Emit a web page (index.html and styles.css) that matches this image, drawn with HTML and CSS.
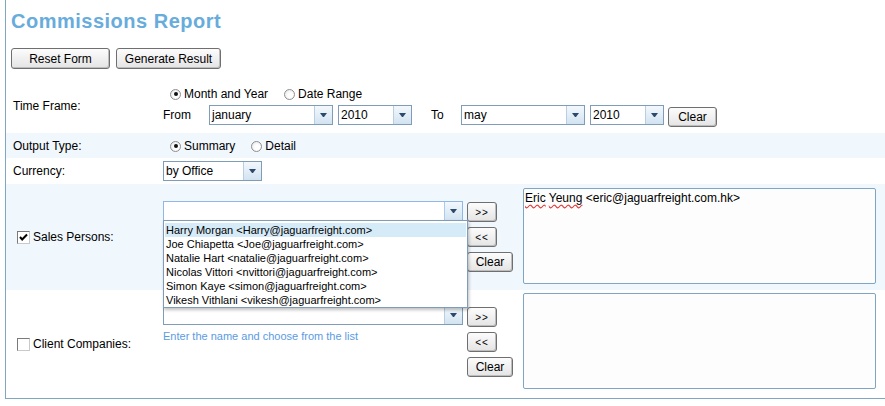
FILE: index.html
```html
<!DOCTYPE html>
<html>
<head>
<meta charset="utf-8">
<title>Commissions Report</title>
<link rel="stylesheet" href="styles.css">
</head>
<body>
<div class="page">
  <h1 class="title">Commissions Report</h1>
  <div class="actions">
    <button class="btn btn-reset">Reset Form</button>
    <button class="btn btn-generate">Generate Result</button>
  </div>

  <div class="form">
    <div class="row row-time">
      <div class="label">Time Frame:</div>
      <div class="ctl ctl-time">
        <div class="radios">
          <span class="radio-opt"><span class="radio on"></span>Month and Year</span>
          <span class="radio-opt"><span class="radio"></span>Date Range</span>
        </div>
        <div class="range">
          <span class="word word-from">From</span>
          <div class="select w-month"><span class="val">january</span><span class="arrow"></span></div>
          <div class="select w-year"><span class="val">2010</span><span class="arrow"></span></div>
          <span class="word word-to">To</span>
          <div class="select w-month"><span class="val">may</span><span class="arrow"></span></div>
          <div class="select w-year"><span class="val">2010</span><span class="arrow"></span></div>
          <button class="btn btn-clear-range">Clear</button>
        </div>
      </div>
    </div>

    <div class="row row-output alt">
      <div class="label">Output Type:</div>
      <div class="ctl">
        <div class="radios">
          <span class="radio-opt"><span class="radio on"></span>Summary</span>
          <span class="radio-opt"><span class="radio"></span>Detail</span>
        </div>
      </div>
    </div>

    <div class="row row-currency">
      <div class="label">Currency:</div>
      <div class="ctl">
        <div class="select w-cur"><span class="val">by Office</span><span class="arrow"></span></div>
      </div>
    </div>

    <div class="row row-sales alt">
      <div class="label"><span class="check on"><svg viewBox="0 0 11 11" width="11" height="11"><path d="M2 5 L4.2 7.5 L9 2.5" fill="none" stroke="#000" stroke-width="2"/></svg></span>Sales Persons:</div>
      <div class="ctl ctl-pick">
        <div class="combo-col">
          <div class="select w-combo focus">
            <span class="val"></span><span class="arrow"></span>
            <div class="dropdown">
              <div class="item hl">Harry Morgan &lt;Harry@jaguarfreight.com&gt;</div>
              <div class="item">Joe Chiapetta &lt;Joe@jaguarfreight.com&gt;</div>
              <div class="item">Natalie Hart &lt;natalie@jaguarfreight.com&gt;</div>
              <div class="item">Nicolas Vittori &lt;nvittori@jaguarfreight.com&gt;</div>
              <div class="item">Simon Kaye &lt;simon@jaguarfreight.com&gt;</div>
              <div class="item">Vikesh Vithlani &lt;vikesh@jaguarfreight.com&gt;</div>
            </div>
          </div>
        </div>
        <div class="btn-col">
          <button class="btn btn-small">&gt;&gt;</button>
          <button class="btn btn-small">&lt;&lt;</button>
          <button class="btn btn-clear">Clear</button>
        </div>
        <div class="box"><span class="spell">Eric</span> <span class="spell">Yeung</span> &lt;eric@jaguarfreight.com.hk&gt;</div>
      </div>
    </div>

    <div class="row row-client">
      <div class="label"><span class="check"></span>Client Companies:</div>
      <div class="ctl ctl-pick">
        <div class="combo-col">
          <div class="select w-combo"><span class="val"></span><span class="arrow"></span></div>
          <div class="hint">Enter the name and choose from the list</div>
        </div>
        <div class="btn-col">
          <button class="btn btn-small">&gt;&gt;</button>
          <button class="btn btn-small">&lt;&lt;</button>
          <button class="btn btn-clear">Clear</button>
        </div>
        <div class="box"></div>
      </div>
    </div>
  </div>
</div>
</body>
</html>
```

FILE: styles.css
```css
body {
  margin: 0;
  background: #fff;
  color: #000;
  font-family: "Liberation Sans", Arial, sans-serif;
  font-size: 12px;
}

.page {
  margin-left: 5px;
  width: 879px;
  height: 398px;
  border-left: 1px solid #7fa6c3;
  border-bottom: 1px solid #7fa6c3;
}

.title {
  margin: 0;
  padding: 9px 0 0 5px;
  font-size: 20px;
  line-height: 24px;
  font-weight: bold;
  letter-spacing: 0.5px;
  color: #68acdc;
}

.actions {
  display: flex;
  gap: 6px;
  padding-left: 5px;
  margin-top: 15px;
}

.btn {
  box-sizing: border-box;
  height: 21px;
  padding: 0;
  font-family: "Liberation Sans", Arial, sans-serif;
  font-size: 12px;
  color: #000;
  background: linear-gradient(#fcfcfc, #e4e4e4);
  border: 1px solid #6f6f6f;
  border-radius: 3px;
  box-shadow: inset -1px -1px 0 #bdbdbd;
}

.btn-reset { width: 99px; }
.btn-generate { width: 105px; }

.form {
  margin-top: 15px;
}

.row {
  display: flex;
  align-items: stretch;
}

.row.alt {
  background: #f0f7fd;
}

.label {
  width: 157px;
  flex: none;
  box-sizing: border-box;
  padding-left: 7px;
  display: flex;
  align-items: center;
}

.ctl {
  display: flex;
  align-items: center;
}

/* time frame */
.row-time {
  padding: 2px 0 7px;
}

.ctl-time {
  flex-direction: column;
  align-items: flex-start;
}

.radios {
  display: flex;
  align-items: center;
  height: 16px;
  padding-left: 7px;
}

.row-output .radios { margin-top: 1px; }

.radio-opt {
  display: flex;
  align-items: center;
  margin-right: 16px;
}

.radio {
  box-sizing: border-box;
  width: 11px;
  height: 11px;
  border-radius: 50%;
  border: 1px solid #8e8e8e;
  background: radial-gradient(circle at 60% 60%, #ffffff 30%, #e2e2e2 100%);
  margin-right: 3px;
  display: flex;
  align-items: center;
  justify-content: center;
}

.radio.on::after {
  content: "";
  width: 4px;
  height: 4px;
  border-radius: 50%;
  background: #111;
}

.range {
  display: flex;
  align-items: flex-start;
  height: 22px;
  margin-top: 2px;
}

.word {
  line-height: 20px;
  margin-top: 1px;
}

.word-from { width: 46px; }
.word-to { width: 30px; margin-left: 19px; }

.select {
  position: relative;
  box-sizing: border-box;
  height: 20px;
  display: flex;
  background: #fff;
  border: 1px solid #7f9db9;
  margin-top: 1px;
}

.select + .select { margin-left: 5px; }

.select .val {
  flex: 1;
  padding-left: 2px;
  line-height: 18px;
}

.select .arrow {
  width: 17px;
  flex: none;
  border-left: 1px solid #b8cfe3;
  background: linear-gradient(#f3f8fc, #d2e3f1);
  display: flex;
  align-items: center;
  justify-content: center;
}

.select .arrow::after {
  content: "";
  width: 1px;
  height: 0;
  border-top: 4px solid #2c4b6c;
  border-left: 3px solid transparent;
  border-right: 3px solid transparent;
}

.w-month { width: 124px; }
.w-year { width: 74px; }
.w-cur { width: 99px; margin-top: 0; }
.w-combo { width: 300px; margin-top: 0; }

.select.focus {
  border-color: #8fb8e6;
}

.select.focus .arrow {
  border-left-color: #a9cbee;
}

.btn-clear-range {
  width: 49px;
  height: 20px;
  margin-left: 4px;
  margin-top: 3px;
}

/* output / currency */
.row-output { height: 25px; }
.row-currency { height: 26px; }

/* pickers */
.row-sales { height: 106px; }
.row-client { height: 108px; }

.check {
  box-sizing: border-box;
  width: 13px;
  height: 13px;
  margin-left: 4px;
  margin-right: 3px;
  border: 1px solid #7a7a7a;
  border-right-color: #c9c9c9;
  border-bottom-color: #c9c9c9;
  background: #fff;
  display: flex;
  align-items: center;
  justify-content: center;
}

.check svg { display: block; }

.ctl-pick {
  align-items: flex-start;
}

.row-sales .ctl-pick { padding-top: 4px; }
.row-client .ctl-pick { padding-top: 3px; }

.combo-col {
  width: 300px;
  flex: none;
}

.row-sales .combo-col { margin-top: 13px; }
.row-client .combo-col { margin-top: 12px; }

.hint {
  margin-top: 5px;
  font-size: 11px;
  line-height: 13px;
  color: #5b9be3;
}

.btn-col {
  display: flex;
  flex-direction: column;
  gap: 5px;
  width: 46px;
  margin-left: 4px;
  margin-top: 14px;
}

.btn-small {
  width: 30px;
  height: 20px;
  font-size: 10px;
  letter-spacing: 1px;
}

.btn-clear {
  width: 46px;
  height: 20px;
}

.box {
  box-sizing: border-box;
  width: 353px;
  height: 96px;
  margin-left: 10px;
  padding: 2px 1px;
  line-height: 14px;
  background: #fdfdfd;
  border: 1px solid #7fa5c4;
  border-radius: 2px;
}

.spell {
  text-decoration: underline wavy #e23b3b;
  text-decoration-skip-ink: none;
  text-underline-offset: 2px;
}

.dropdown {
  position: absolute;
  z-index: 10;
  left: -1px;
  top: 18px;
  box-sizing: border-box;
  width: 305px;
  padding: 2px 1px 0;
  background: #fff;
  border: 1px solid #7f9db9;
  box-shadow: 1px 2px 3px rgba(0, 0, 0, 0.25);
}

.item {
  height: 14px;
  line-height: 14px;
  padding-left: 1px;
  font-size: 11px;
  white-space: nowrap;
}

.item.hl {
  background: #d6ebf8;
}
```
